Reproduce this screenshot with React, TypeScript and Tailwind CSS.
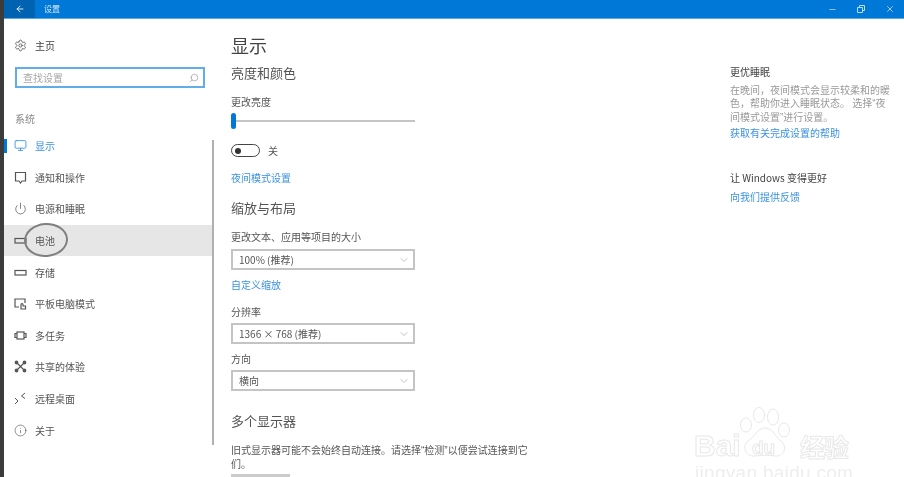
import { ArrowLeft, ChevronDown, Info, Minus, Monitor, Power, Search, Settings, X } from 'lucide-react'
import type { ReactNode } from 'react'

const stroke = { fill: 'none', stroke: 'currentColor', strokeWidth: 1.2 }

function NoticeIcon() {
  return (
    <svg width="13" height="13" viewBox="0 0 13 13" {...stroke}>
      <path d="M1.5 1.5h10v8.5H8L6.5 12 5 10H1.5z" />
    </svg>
  )
}

function BatteryIcon() {
  return (
    <svg width="13" height="13" viewBox="0 0 13 13" {...stroke}>
      <rect x="1" y="4.5" width="11" height="4.5" />
    </svg>
  )
}

function TabletIcon() {
  return (
    <svg width="13" height="13" viewBox="0 0 13 13" {...stroke}>
      <path d="M5 10H1V2h10v4" />
      <path d="M7 12V7.5a1 1 0 0 1 2 0V9h2.5v3z" />
    </svg>
  )
}

function TaskIcon() {
  return (
    <svg width="13" height="13" viewBox="0 0 13 13" {...stroke}>
      <rect x="3" y="3" width="7" height="7" />
      <path d="M3 4.5H1v4h2M10 4.5h2v4h-2" />
    </svg>
  )
}

function ShareIcon() {
  return (
    <svg width="13" height="13" viewBox="0 0 13 13" {...stroke}>
      <path d="M3 3l7 7M10 3l-7 7" />
      <circle cx="2.5" cy="2.5" r="1.3" fill="currentColor" />
      <circle cx="10.5" cy="2.5" r="1.3" fill="currentColor" />
      <circle cx="2.5" cy="10.5" r="1.3" fill="currentColor" />
      <circle cx="10.5" cy="10.5" r="1.3" fill="currentColor" />
    </svg>
  )
}

function RemoteIcon() {
  return (
    <svg width="13" height="13" viewBox="0 0 13 13" {...stroke} strokeWidth={1}>
      <path d="M1 6l3 3-3 3M11 1L7.5 4l3.5 2.5" />
    </svg>
  )
}

const navItems: { label: string; icon: ReactNode; active?: boolean; hover?: boolean }[] = [
  { label: '显示', icon: <Monitor size={13} strokeWidth={1.6} />, active: true },
  { label: '通知和操作', icon: <NoticeIcon /> },
  { label: '电源和睡眠', icon: <Power size={13} strokeWidth={1.3} /> },
  { label: '电池', icon: <BatteryIcon />, hover: true },
  { label: '存储', icon: <BatteryIcon /> },
  { label: '平板电脑模式', icon: <TabletIcon /> },
  { label: '多任务', icon: <TaskIcon /> },
  { label: '共享的体验', icon: <ShareIcon /> },
  { label: '远程桌面', icon: <RemoteIcon /> },
  { label: '关于', icon: <Info size={13} strokeWidth={1.2} /> },
]

function Quote({ children }: { children: string }) {
  return <span className="font-['Liberation_Sans',sans-serif]">{children}</span>
}

function Sidebar() {
  return (
    <aside className="relative w-[210px] shrink-0">
      <div className="flex h-[14px] items-center gap-[8px] pl-[10px] mt-[19px] text-[10px] text-[#444]">
        <Settings size={13} strokeWidth={1.8} className="text-[#666]" />
        <span>主页</span>
      </div>
      <div className="ml-[11px] mt-[15px] flex h-[21px] w-[190px] items-center justify-between border-2 border-[#62ade9] pl-[6px] pr-[4px] text-[10px] text-[#a5a5a5]">
        <span>查找设置</span>
        <Search size={10} className="scale-x-[-1] text-[#aaa]" />
      </div>
      <div className="ml-[11px] mt-[24px] h-[14px] text-[10px] leading-[14px] text-[#888]">系统</div>
      <nav className="mt-[4px]">
        {navItems.map((item) => (
          <div
            key={item.label}
            className={`relative flex h-[31.6px] items-center gap-[8px] pl-[10px] text-[10px] ${
              item.active ? 'text-[#3a92e2]' : 'text-[#555]'
            } ${item.hover ? 'bg-[#e6e6e6]' : ''}`}
          >
            {item.active && <div className="absolute left-0 top-[9px] h-[14px] w-[3px] bg-[#0078d7]" />}
            {item.icon}
            <span>{item.label}</span>
          </div>
        ))}
      </nav>
      {/* hand drawn circle round the battery row */}
      <div className="absolute left-[20px] top-[204px] h-[34px] w-[44px] rounded-[50%] border-2 border-[#808080] rotate-[-4deg]" />
      <div className="absolute right-0 top-[121px] h-[305px] w-[2px] bg-[#b0b0b0]" />
    </aside>
  )
}

function Dropdown({ value }: { value: string }) {
  return (
    <div className="flex h-[21px] w-[184px] items-center justify-between border-2 border-[#c4c4c4] pl-[6px] pr-[3px] text-[10px] text-[#555]">
      <span>{value}</span>
      <ChevronDown size={12} strokeWidth={1.2} className="text-[#999]" />
    </div>
  )
}

function Main() {
  return (
    <main className="w-[300px] ml-[17px] shrink-0 pt-[14px] text-[#555]">
      <h1 className="text-[18px] leading-[24px] text-[#444]">显示</h1>
      <h2 className="mt-[7px] text-[13px] leading-[18px]">亮度和颜色</h2>
      <div className="mt-[13px] text-[10px] leading-[14px]">更改亮度</div>
      <div className="mt-[4px] flex h-[16px] w-[184px] items-center">
        <div className="h-[16px] w-[5px] rounded-full bg-[#0078d7]" />
        <div className="h-[2px] flex-1 bg-[#c4c4c4]" />
      </div>
      <div className="mt-[15px] flex h-[13px] items-center gap-[8px]">
        <div className="flex h-[13px] w-[29px] items-center rounded-full border-[1.5px] border-[#444] pl-[3px]">
          <div className="h-[6px] w-[6px] rounded-full bg-[#333]" />
        </div>
        <span className="text-[10px]">关</span>
      </div>
      <div className="mt-[14px] text-[10px] leading-[14px] text-[#3a92e2]">夜间模式设置</div>
      <h2 className="mt-[14px] text-[13px] leading-[18px]">缩放与布局</h2>
      <div className="mt-[13px] text-[10px] leading-[14px]">更改文本、应用等项目的大小</div>
      <div className="mt-[5px]">
        <Dropdown value="100% (推荐)" />
      </div>
      <div className="mt-[8px] text-[10px] leading-[14px] text-[#3a92e2]">自定义缩放</div>
      <div className="mt-[13px] text-[10px] leading-[14px]">分辨率</div>
      <div className="mt-[4px]">
        <Dropdown value="1366 × 768 (推荐)" />
      </div>
      <div className="mt-[8px] text-[10px] leading-[14px]">方向</div>
      <div className="mt-[4px]">
        <Dropdown value="横向" />
      </div>
      <h2 className="mt-[21px] text-[13px] leading-[18px]">多个显示器</h2>
      <p className="mt-[13px] text-[10px] leading-[13px]">
        旧式显示器可能不会始终自动连接。请选择<Quote>“</Quote>检测<Quote>”</Quote>以便尝试连接到它们。
      </p>
      <div className="mt-[4px] h-[20px] w-[59px] bg-[#ccc]" />
    </main>
  )
}

function Aside() {
  return (
    <section className="ml-[199px] w-[160px] pt-[46px] text-[10px]">
      <div className="leading-[14px] text-[#444]">更优睡眠</div>
      <p className="mt-[4px] leading-[13px] text-[#999]">
        在晚间，夜间模式会显示较柔和的暖色，帮助你进入睡眠状态。 选择<Quote>“</Quote>夜间模式设置<Quote>”</Quote>进行设置。
      </p>
      <div className="mt-[2px] leading-[14px] text-[#3a92e2] whitespace-nowrap">获取有关完成设置的帮助</div>
      <div className="mt-[31px] leading-[14px] text-[#444] whitespace-nowrap">让 Windows 变得更好</div>
      <div className="mt-[5px] leading-[14px] text-[#3a92e2]">向我们提供反馈</div>
    </section>
  )
}

function Watermark() {
  return (
    <div className="absolute left-[694px] top-[406px] h-[71px] w-[170px] text-transparent">
      <svg width="60" height="56" viewBox="0 0 60 56" className="absolute left-[44px] top-0" fill="none" stroke="#e8e8e8" strokeWidth="1">
        <ellipse cx="8" cy="19" rx="5.5" ry="7" />
        <ellipse cx="21" cy="9" rx="5.5" ry="7.5" />
        <ellipse cx="35" cy="11" rx="5.5" ry="8" />
        <ellipse cx="46" cy="24" rx="5.5" ry="7" />
        <path d="M27 22c-8 0-10 9-17 13-6 5-3 16 7 15 6-1 13-1 20 0 9 1 13-9 6-15-6-4-8-13-16-13z" />
      </svg>
      <div className="absolute left-0 top-[22px] text-[30px] leading-[36px] font-bold [-webkit-text-stroke:1px_#e8e8e8] font-['Liberation_Sans',sans-serif]">
        Bai
      </div>
      <div className="absolute left-[58px] top-[30px] text-[19px] leading-[24px] font-bold [-webkit-text-stroke:1px_#e8e8e8] font-['Liberation_Sans',sans-serif]">
        du
      </div>
      <div className="absolute left-[106px] top-[24px] text-[25px] leading-[32px] font-bold tracking-[-1px] [-webkit-text-stroke:1px_#e8e8e8]">
        经验
      </div>
      <div className="absolute left-[1px] top-[57px] text-[19px] leading-[20px] text-[#eeeeee] tracking-[0.3px] font-['Liberation_Sans',sans-serif]">
        jingyan.baidu.com
      </div>
    </div>
  )
}

export default function App() {
  return (
    <div className="relative flex h-[477px] w-[904px] overflow-hidden bg-[#3c3c3c] pl-[4px] font-['Noto_Sans_CJK_SC','Liberation_Sans',sans-serif] blur-[0.5px]">
      <div className="flex h-full flex-1 flex-col bg-white">
        <header className="flex h-[19px] shrink-0 items-center border-b border-[#5aa9e6] bg-[#0078d7] text-white">
          <div className="flex h-full w-[31px] items-center justify-center bg-[#0063b1]">
            <ArrowLeft size={10} />
          </div>
          <span className="ml-[9px] text-[8px] text-[#d7e9f8]">设置</span>
          <div className="ml-auto flex items-center gap-[20px] pr-[9px] text-[#bcdcf4]">
            <Minus size={9} />
            <svg width="8" height="8" viewBox="0 0 8 8" fill="none" stroke="currentColor">
              <path d="M.5 2.5h5v5h-5zM2.5 2.5v-2h5v5h-2" />
            </svg>
            <X size={10} />
          </div>
        </header>
        <div className="flex min-h-0 flex-1 overflow-hidden">
          <Sidebar />
          <Main />
          <Aside />
        </div>
      </div>
      <Watermark />
    </div>
  )
}
